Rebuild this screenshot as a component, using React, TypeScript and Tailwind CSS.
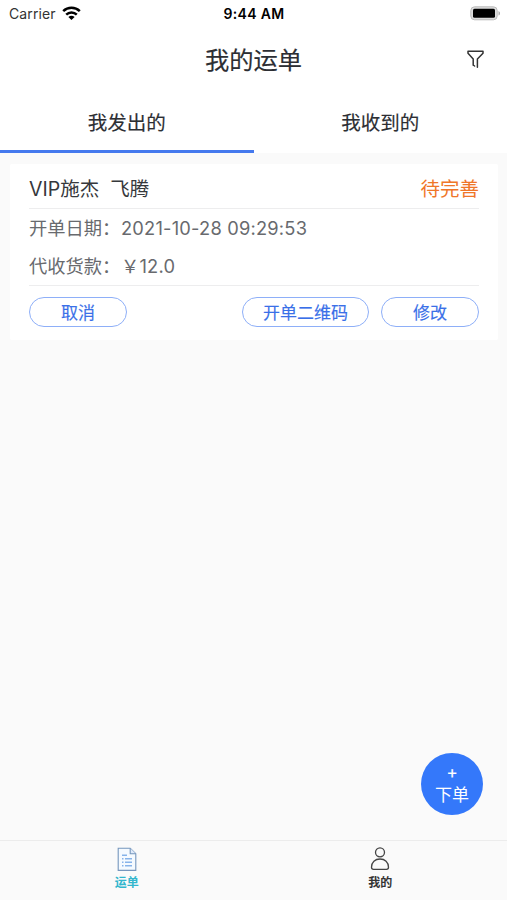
import React from "react";

function StatusBar() {
  return (
    <div className="grid h-7 grid-cols-3 items-center pl-[9px] pr-[6px] text-black">
      <div className="flex items-center gap-[6px]">
        <span className="text-[14px] leading-7 tracking-[0.1px] text-[#333]">Carrier</span>
        <svg className="-mt-[2px]" width="19" height="15" viewBox="0 0 19 15" fill="none" stroke="#000" strokeWidth="2.5">
          <path d="M1.2 5.2a12 12 0 0 1 16.6 0" />
          <path d="M4.2 8.6a7.6 7.6 0 0 1 10.6 0" />
          <path d="M9.5 14 6.4 11.1a4.5 4.5 0 0 1 6.2 0Z" fill="#000" stroke="none" />
        </svg>
      </div>
      <span className="-ml-[2px] whitespace-nowrap text-center text-[14px] font-semibold leading-7 tracking-[0.3px]">9:44 AM</span>
      <svg className="-mt-[2px] justify-self-end" width="31" height="15" viewBox="0 0 31 15">
        <rect x="0.8" y="0.8" width="26.4" height="13" rx="3.8" fill="#ddd" stroke="#bbb" strokeWidth="1" />
        <rect x="3" y="2.8" width="22" height="9" rx="1.5" fill="#000" />
        <path d="M28.5 5v4.6c2-.8 2-3.8 0-4.6Z" fill="#aaa" />
      </svg>
    </div>
  );
}

function PillButton({ label, width }: { label: string; width: string }) {
  return (
    <button
      className={`${width} flex h-[30px] items-center justify-center rounded-full border border-[#8eaff8] bg-white pt-[3px] text-[17px] text-[#3a70e8] [-webkit-text-stroke:0.15px_#3a70e8]`}
    >
      {label}
    </button>
  );
}

export default function App() {
  return (
    <div className="flex h-[900px] w-[507px] flex-col bg-[#fafafa] font-['Inter','Noto_Sans_CJK_SC',sans-serif]">
      <header className="h-[153px] bg-white">
        <StatusBar />
        <div className="grid h-16 grid-cols-[60px_1fr_60px] items-center">
          <span />
          <h1 className="text-center text-[24.3px] leading-[64px] text-[#2c2e33] [-webkit-text-stroke:0.15px_#2c2e33]">我的运单</h1>
          <svg className="-mt-[2px] ml-[19px]" width="19" height="20" viewBox="0 0 19 20" fill="none" stroke="#333" strokeWidth="1.5" strokeLinejoin="round" strokeLinecap="round">
            <path d="M7.2 16.2V10L2 4.2V2.2h15v2L11.4 10v8.2M7.2 16l1.4 1" />
          </svg>
        </div>
        <nav className="flex h-[61px] text-[19.5px] text-[#2c2e33] [-webkit-text-stroke:0.15px_#2c2e33]">
          <div className="flex flex-1 items-center justify-center border-b-[3px] border-[#4579ee] pt-[6px]">我发出的</div>
          <div className="flex flex-1 items-center justify-center border-b-[3px] border-transparent pt-[6px]">我收到的</div>
        </nav>
      </header>

      <main className="flex flex-1 flex-col items-end justify-between pb-[25px] pt-[11px]">
        <section className="ml-[10px] mr-[9px] flex h-[176px] flex-col self-stretch rounded-[2px] bg-white px-[19px]">
          <div className="flex h-[44px] items-center justify-between pt-[7px] text-[19.5px]">
            <div className="flex gap-[11px] text-[#36383c]">
              <span>VIP施杰</span>
              <span>飞腾</span>
            </div>
            <span className="text-[#ef7629]">待完善</span>
          </div>
          <div className="flex h-[78px] flex-col border-y border-[#ededee] text-[18.3px] text-[#686a6e]">
            <div className="flex h-[38px] items-center pt-[2px]">
              <span className="w-[92px] shrink-0 whitespace-nowrap">开单日期：</span>
              <span className="tracking-[0.2px]">2021-10-28 09:29:53</span>
            </div>
            <div className="flex h-[38px] items-center pt-[2px]">
              <span className="w-[92px] shrink-0 whitespace-nowrap">代收货款：</span>
              <span className="tracking-[0.2px]">￥12.0</span>
            </div>
          </div>
          <div className="flex justify-between pt-[11px]">
            <PillButton label="取消" width="w-[98px]" />
            <div className="flex gap-[12px]">
              <PillButton label="开单二维码" width="w-[127px]" />
              <PillButton label="修改" width="w-[98px]" />
            </div>
          </div>
        </section>
        <button className="mr-6 flex h-[62px] w-[62px] flex-col items-center rounded-full bg-[#3478fa] pt-[8px] text-[17px] text-white">
          <span className="h-[23px] leading-[22px] [-webkit-text-stroke:0.15px_white]">+</span>
          <span className="h-[22px] leading-[22px]">下单</span>
        </button>
      </main>

      <footer className="flex h-[60px] border-t border-[#ececec] text-[12px] font-bold">
        <div className="flex flex-1 flex-col items-center pt-[6px] text-[#32b6cd]">
          <svg width="20" height="25" viewBox="0 0 20 25" fill="none" stroke="#7696bd" strokeWidth="1.1">
            <path d="M1.2 1.2h12l5.6 5.6v16.6H1.2Z" fill="#f5faff" />
            <path d="M13.2 1.2v5.6h5.6" fill="#dfeafa" />
            <path d="M5 8.2h5M5 11.7h1.5M8 11.7h7M5 15.2h1.5M8 15.2h7M5 18.7h1.5M8 18.7h7" stroke="#87b3ea" strokeWidth="1.4" />
          </svg>
          <span className="mt-[2px] leading-[18px]">运单</span>
        </div>
        <div className="flex flex-1 flex-col items-center pt-[6px] text-[#333]">
          <svg width="20" height="25" viewBox="0 0 20 25" fill="none" stroke="#444" strokeWidth="1.3">
            <circle cx="10" cy="5.3" r="4.5" />
            <path d="M1.5 20.2c0-5 3.6-8.2 8.5-8.2s8.5 3.2 8.5 8.2c0 1.5-.6 2.1-2 2.1h-13c-1.4 0-2-.6-2-2.1Z" />
          </svg>
          <span className="mt-[2px] leading-[18px]">我的</span>
        </div>
      </footer>
    </div>
  );
}
